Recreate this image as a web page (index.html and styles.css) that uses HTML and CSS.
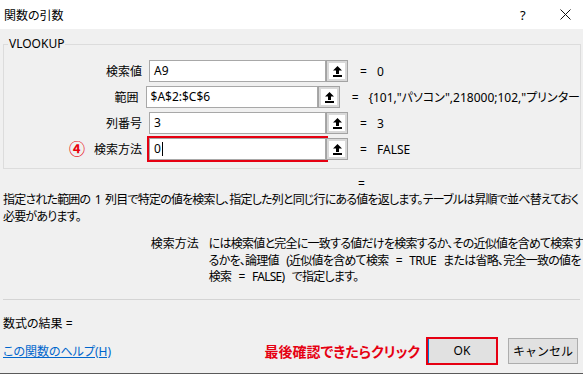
FILE: index.html
```html
<!DOCTYPE html>
<html lang="ja">
<head>
<meta charset="UTF-8">
<title>関数の引数</title>
<link rel="stylesheet" href="styles.css">
</head>
<body>
<div class="window">
  <div class="titlebar">
    <span class="title">関数の引数</span>
    <span class="help">?</span>
    <span class="close">
      <svg width="11" height="11" viewBox="0 0 11 11"><path d="M0.5 0.5L10.5 10.5M10.5 0.5L0.5 10.5" stroke="#111" stroke-width="1" fill="none"/></svg>
    </span>
  </div>

  <fieldset class="group">
    <legend>VLOOKUP</legend>
    <div class="row">
      <label class="arg-label">検索値</label>
      <div class="field">A9</div>
      <button class="ref-btn"><svg width="9" height="11" viewBox="0 0 9 11"><path d="M4.5 0L9 4.5H6V8H3V4.5H0Z" fill="#000"/><rect x="0" y="9" width="9" height="2" fill="#000"/></svg></button>
      <span class="eq">=</span>
      <span class="val">0</span>
    </div>
    <div class="row">
      <label class="arg-label">範囲</label>
      <div class="field">$A$2:$C$6</div>
      <button class="ref-btn"><svg width="9" height="11" viewBox="0 0 9 11"><path d="M4.5 0L9 4.5H6V8H3V4.5H0Z" fill="#000"/><rect x="0" y="9" width="9" height="2" fill="#000"/></svg></button>
      <span class="eq">=</span>
      <span class="val">{101,"パソコン",218000;102,"プリンター</span>
    </div>
    <div class="row">
      <label class="arg-label">列番号</label>
      <div class="field">3</div>
      <button class="ref-btn"><svg width="9" height="11" viewBox="0 0 9 11"><path d="M4.5 0L9 4.5H6V8H3V4.5H0Z" fill="#000"/><rect x="0" y="9" width="9" height="2" fill="#000"/></svg></button>
      <span class="eq">=</span>
      <span class="val">3</span>
    </div>
    <div class="row">
      <label class="arg-label"><span class="step">④</span>検索方法</label>
      <div class="field active">0<span class="caret"></span></div>
      <button class="ref-btn"><svg width="9" height="11" viewBox="0 0 9 11"><path d="M4.5 0L9 4.5H6V8H3V4.5H0Z" fill="#000"/><rect x="0" y="9" width="9" height="2" fill="#000"/></svg></button>
      <span class="eq">=</span>
      <span class="val">FALSE</span>
    </div>
  </fieldset>

  <div class="result-eq">=</div>

  <p class="desc">指定された範囲の 1 列目で特定の値を検索し、指定した列と同じ行にある値を返します。テーブルは昇順で並べ替えておく<br>必要があります。</p>

  <div class="arg-help">
    <span class="arg-name">検索方法</span>
    <p class="arg-text">には検索値と完全に一致する値だけを検索するか、その近似値を含めて検索す<br>るかを、論理値 (近似値を含めて検索 = TRUE または省略、完全一致の値を<br>検索 = FALSE) で指定します。</p>
  </div>

  <div class="divider"></div>

  <div class="formula-result">数式の結果 =</div>

  <div class="footer">
    <a class="help-link" href="#">この関数のヘルプ(H)</a>
    <span class="note">最後確認できたらクリック</span>
    <button class="btn ok">OK</button>
    <button class="btn">キャンセル</button>
  </div>
</div>
</body>
</html>
```

FILE: styles.css
```css
body {
  margin: 0;
  padding: 0;
  font-family: "Noto Sans", "Noto Sans CJK JP", sans-serif;
  font-size: 12px;
  font-feature-settings: "palt" 1;
  color: #000;
  background-color: #f0f0f0;
}

.window {
  width: 583px;
  height: 373px;
  border-bottom: 1px solid #5a5a5a;
  background-color: #f0f0f0;
  overflow: hidden;
}

.titlebar {
  height: 29px;
  background-color: #fff;
  display: flex;
  align-items: center;
}
.title {
  padding-left: 4px;
  flex: 1;
}
.help {
  width: 10px;
  margin-right: 30px;
  font-size: 13px;
}
.close {
  width: 11px;
  margin-right: 12px;
  display: flex;
}

.group {
  margin: 7px 2px 0 3px;
  padding: 8px 0 8px 0;
  border: 1px solid #dcdcdc;
  min-width: 0;
}
.group legend {
  margin-left: 4px;
  padding: 0 1px;
  line-height: 16px;
}

.row {
  display: flex;
  align-items: center;
  height: 22px;
  margin-bottom: 4px;
}
.row:last-child {
  margin-bottom: 0;
}
.arg-label {
  width: 138px;
  margin-right: 7px;
  text-align: right;
  display: flex;
  justify-content: flex-end;
  align-items: center;
}
.step {
  color: #e8000b;
  font-size: 16px;
  line-height: 16px;
  font-weight: bold;
  margin-right: 9px;
}
.field {
  box-sizing: border-box;
  width: 177px;
  height: 22px;
  border: 1px solid #a8a8a8;
  background-color: #fff;
  padding: 0 4px;
  line-height: 20px;
  display: flex;
  align-items: center;
}
.field.active {
  outline: 2px solid #e60012;
  outline-offset: 0;
}
.caret {
  width: 1px;
  height: 14px;
  background-color: #000;
  margin-left: 1px;
}
.ref-btn {
  box-sizing: border-box;
  width: 22px;
  height: 22px;
  padding: 0;
  border: 1px solid #a3a3a3;
  background-color: #fff;
  box-shadow: inset 0 0 0 2px #d9d9d9;
  display: flex;
  align-items: center;
  justify-content: center;
}
.eq {
  margin-left: 12px;
  width: 17px;
}
.val {
  white-space: nowrap;
}

.result-eq {
  margin: 7px 0 0 358px;
  line-height: 16px;
}

.desc {
  margin: 0 0 0 3px;
  line-height: 16.5px;
  letter-spacing: -0.8px;
  word-spacing: 2px;
  white-space: nowrap;
}

.arg-help {
  display: flex;
  margin-top: 11px;
  line-height: 16.5px;
}
.arg-name {
  width: 200px;
  text-align: right;
  margin-right: 10px;
  white-space: nowrap;
}
.arg-text {
  margin: 0;
  letter-spacing: -0.75px;
  word-spacing: 5px;
  white-space: nowrap;
}

.divider {
  margin: 13px 3px 0 3px;
  border-top: 1px solid #d4d4d4;
}

.formula-result {
  margin: 16px 0 0 3px;
  line-height: 16px;
}

.footer {
  display: flex;
  align-items: center;
  margin-top: 5px;
  padding-left: 3px;
}
.help-link {
  color: #0066cc;
  text-decoration: underline;
  flex: 1;
}
.note {
  color: #e60012;
  font-weight: bold;
  font-size: 14px;
  margin-right: 6px;
}
.btn {
  box-sizing: border-box;
  width: 70px;
  height: 26px;
  border: 1px solid #adadad;
  background-color: #e1e1e1;
  font-family: inherit;
  font-size: 12px;
  padding: 0;
  margin-right: 5px;
}
.btn.ok {
  width: 72px;
  height: 28px;
  border: 2px solid #e60012;
  box-shadow: inset 1px 0 0 #0078d7;
  margin-right: 10px;
}
```
